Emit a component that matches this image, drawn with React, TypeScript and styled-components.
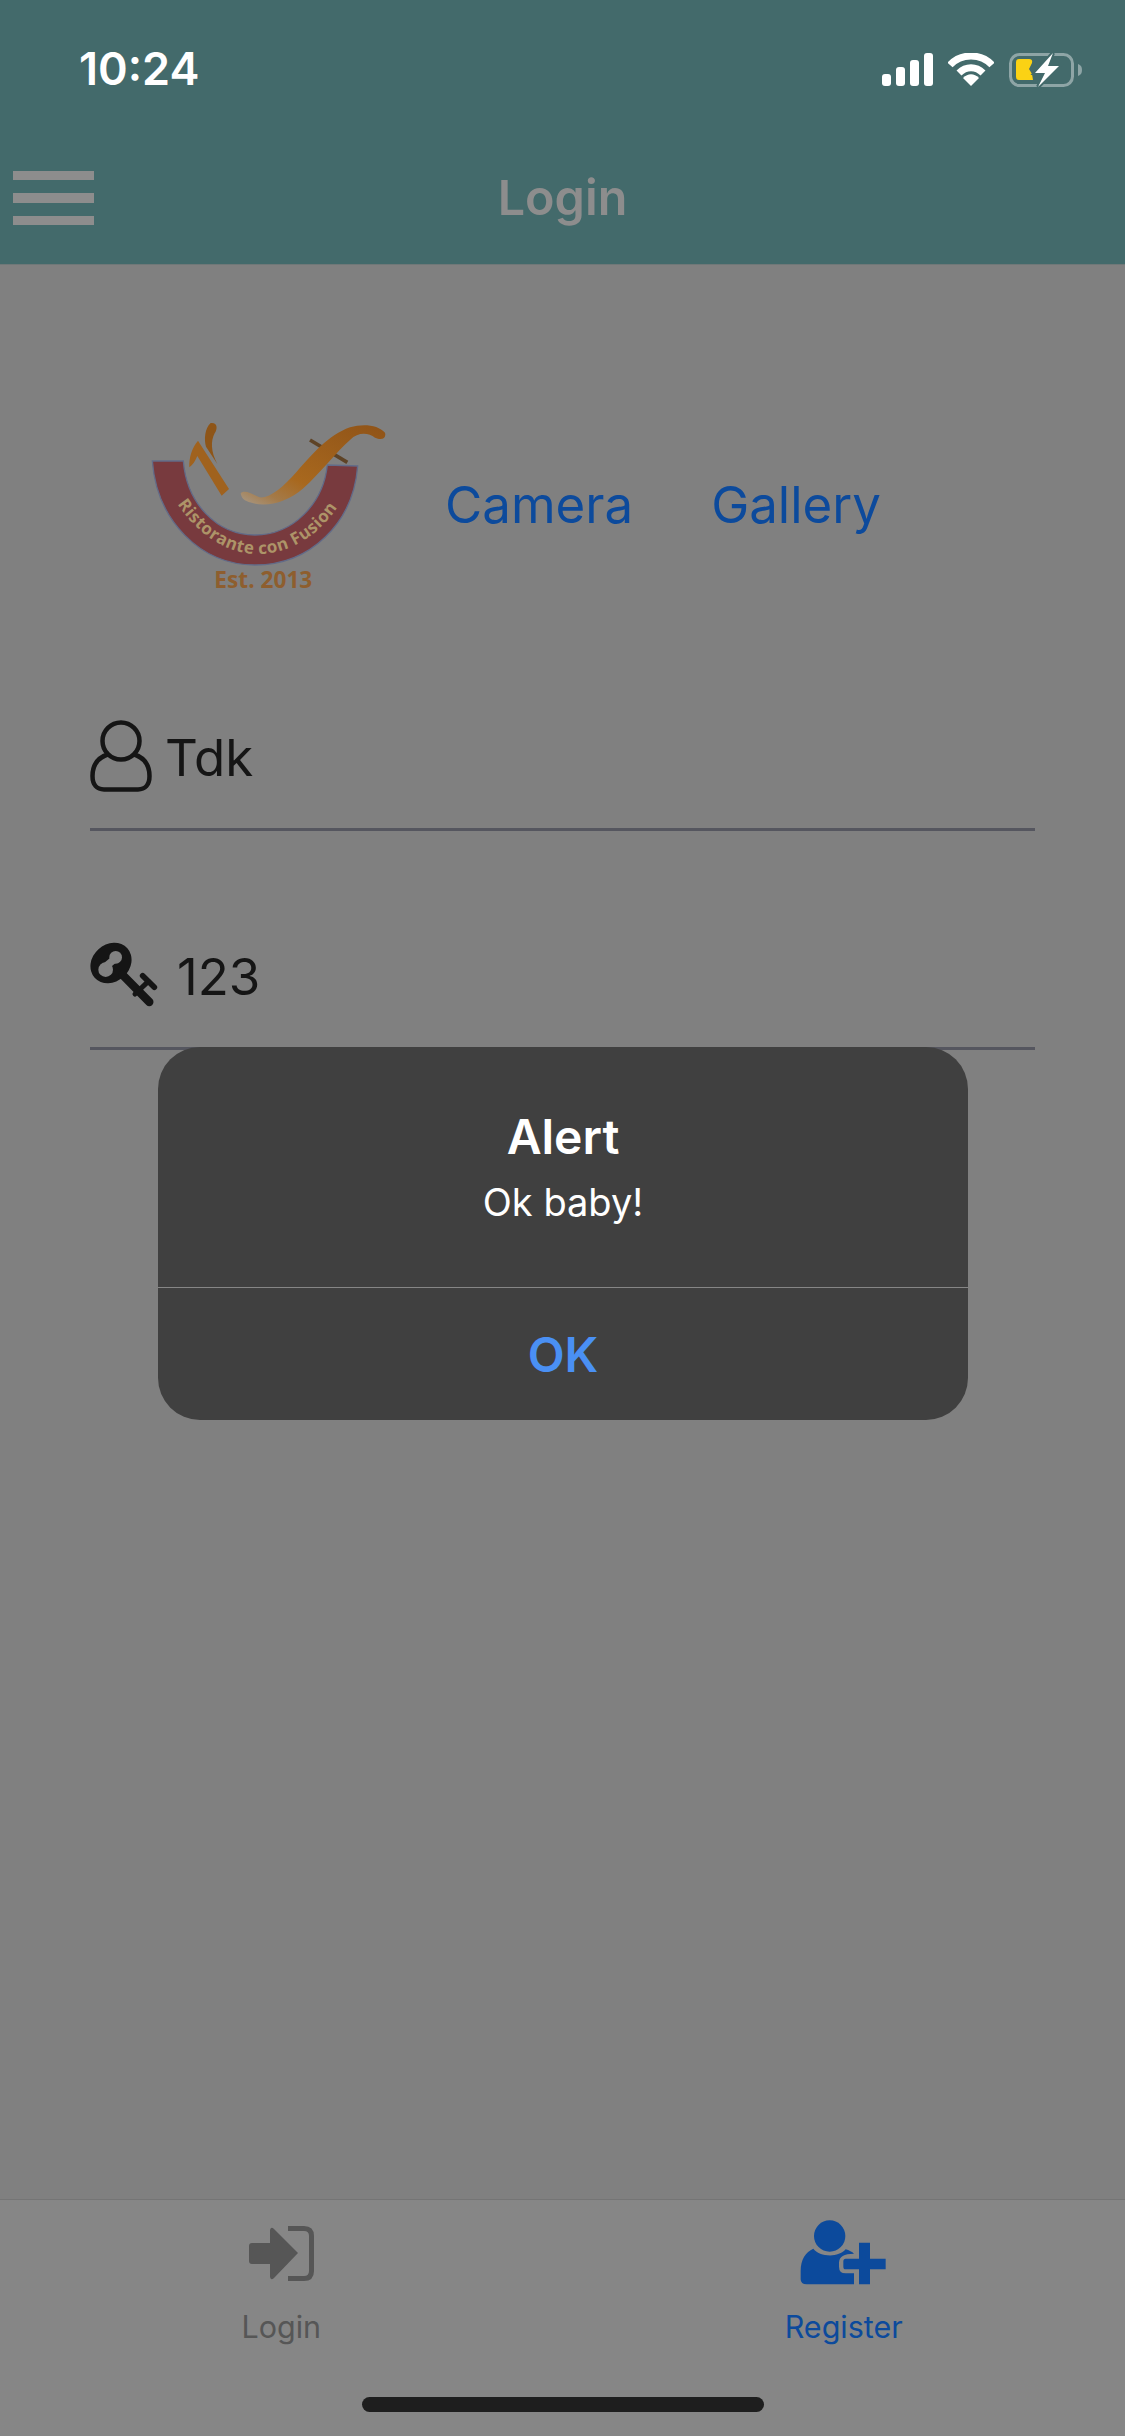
import React from "react";
import styled, { createGlobalStyle } from "styled-components";

const GlobalStyle = createGlobalStyle`
  html, body {
    margin: 0;
    padding: 0;
    background: #808080;
  }
  * {
    box-sizing: border-box;
  }
`;

const Screen = styled.div`
  position: relative;
  width: 1125px;
  height: 2436px;
  display: flex;
  flex-direction: column;
  overflow: hidden;
  background: #808080;
  font-family: Inter, "Liberation Sans", sans-serif;
`;

const Header = styled.header`
  height: 265px;
  background: #436a6b;
  border-bottom: 1px solid #6f7878;
  display: flex;
  flex-direction: column;
`;

const StatusBar = styled.div`
  height: 132px;
  padding: 47px 42px 0 79px;
  display: flex;
  justify-content: space-between;
  align-items: flex-start;
`;

const Clock = styled.div`
  color: #fff;
  font-size: 45px;
  font-weight: 600;
  line-height: 44px;
`;

const StatusIcons = styled.div`
  display: flex;
  gap: 15px;
  align-items: flex-start;
  margin-top: 6px;
`;

const NavBar = styled.div`
  flex: 1;
  display: grid;
  grid-template-columns: 1fr auto 1fr;
  align-items: center;
  padding: 0 13px;
`;

const Burger = styled.div`
  width: 81px;
  display: flex;
  flex-direction: column;
  gap: 13px;
  span {
    height: 9.5px;
    background: #8d8d8d;
  }
`;

const NavTitle = styled.div`
  color: #8d8d8d;
  font-size: 48.5px;
  font-weight: 600;
  line-height: 60px;
`;

const Content = styled.main`
  flex: 1;
  padding: 0 90px;
  display: flex;
  flex-direction: column;
`;

const ImageRow = styled.div`
  margin-top: 125px;
  padding-left: 30px;
  display: flex;
  align-items: center;
`;

const ImageLink = styled.div<{ $gap: number }>`
  color: #0c4a9c;
  font-size: 51px;
  line-height: 60px;
  margin-top: 9px;
  margin-left: ${(p) => p.$gap}px;
`;

const Field = styled.div<{ $height: number; $gap: number }>`
  height: ${(p) => p.$height}px;
  display: flex;
  align-items: flex-start;
  border-bottom: 3px solid #55565f;
  gap: ${(p) => p.$gap}px;
  color: #151515;
  font-size: 51px;
`;

const FieldIcon = styled.div<{ $top: number; $left?: number }>`
  margin-top: ${(p) => p.$top}px;
  margin-left: ${(p) => p.$left ?? 0}px;
  display: flex;
`;

const FieldText = styled.div<{ $top: number }>`
  margin-top: ${(p) => p.$top}px;
  line-height: 60px;
`;

const TabBar = styled.nav`
  height: 237px;
  background: #868686;
  border-top: 1px solid #757575;
  display: grid;
  grid-template-columns: 1fr 1fr;
`;

const Tab = styled.div<{ $active?: boolean }>`
  display: flex;
  flex-direction: column;
  align-items: center;
  height: 145px;
  justify-content: flex-end;
  color: ${(p) => (p.$active ? "#0c4a9c" : "#565656")};
  font-size: 30.5px;
  line-height: 36px;
`;

const TabIcon = styled.div`
  height: 74px;
  display: flex;
  align-items: center;
  margin-bottom: 19px;
`;

const HomeBar = styled.div`
  position: absolute;
  left: 362px;
  top: 2397px;
  width: 402px;
  height: 15px;
  border-radius: 8px;
  background: #1e1e1e;
`;

const AlertBox = styled.div`
  position: absolute;
  left: 158px;
  top: 1047px;
  width: 810px;
  height: 373px;
  border-radius: 42px;
  background: #404040;
  display: flex;
  flex-direction: column;
  color: #fff;
  text-align: center;
`;

const AlertBody = styled.div`
  height: 241px;
  padding-top: 61px;
  border-bottom: 1px solid #868686;
`;

const AlertTitle = styled.div`
  font-size: 48px;
  font-weight: 600;
  line-height: 58px;
`;

const AlertMessage = styled.div`
  font-size: 38px;
  line-height: 46px;
  margin-top: 13px;
`;

const AlertButton = styled.div`
  flex: 1;
  display: flex;
  align-items: center;
  justify-content: center;
  color: #4a90f4;
  font-size: 48px;
  font-weight: 600;
`;

const SignalIcon = () => (
  <svg width="52" height="33" viewBox="0 0 52 33" fill="#fff">
    <rect x="1" y="21" width="9" height="12" rx="3" />
    <rect x="15" y="14" width="9" height="19" rx="3" />
    <rect x="29" y="7" width="9" height="26" rx="3" />
    <rect x="43" y="0" width="9" height="33" rx="3" />
  </svg>
);

const WifiIcon = () => (
  <svg width="46" height="33" viewBox="0 0 46 33" fill="none" stroke="#fff" strokeWidth="7">
    <path d="M2 12 C13 0 33 0 44 12" />
    <path d="M11 20 C18 13 28 13 35 20" />
    <path d="M15 25 L23 33 L31 25 C26 20 20 20 15 25Z" fill="#fff" strokeWidth="0" />
  </svg>
);

const BatteryIcon = () => (
  <svg width="74" height="34" viewBox="0 0 74 34" fill="none">
    <rect x="1.5" y="1.5" width="62" height="31" rx="9" stroke="#8ea5a6" strokeWidth="3" />
    <path d="M69 11 C72 12 73 14 73 17 C73 20 72 22 69 23Z" fill="#8ea5a6" />
    <path d="M7 9 Q7 6 10 6 L20 6 Q24 6 23 10 L20 16 L23 21 L24 27 L10 27 Q7 27 7 24Z" fill="#fbd214" />
    <path
      d="M44 0 L26 20 L36 20 L29 34 L50 13 L39 13Z"
      fill="#fff"
      stroke="#436a6b"
      strokeWidth="4"
      paintOrder="stroke"
    />
  </svg>
);

const Logo = () => (
  <svg width="300" height="220" viewBox="0 0 900 660">
    <defs>
      <linearGradient id="ribbon" x1="0" y1="1" x2="1" y2="0">
        <stop offset="0" stopColor="#a89a88" />
        <stop offset="0.16" stopColor="#a47a48" />
        <stop offset="0.35" stopColor="#a8681e" />
        <stop offset="1" stopColor="#8f5318" />
      </linearGradient>
      <path id="arcText" d="M172 342 C245 450 335 492 415 492 C510 492 600 435 660 340" />
    </defs>
    <path
      d="M97 213 L190 213 C200 340 290 435 405 435 C520 435 610 340 622 225 L713 228 C700 400 570 525 405 525 C240 525 110 390 97 213Z"
      fill="#783a3e"
      stroke="#626b88"
      strokeWidth="4"
    />
    <text fontFamily="'Open Sans', sans-serif" fontSize="51" fontWeight="700" fill="#ad9468" letterSpacing="1.5">
      <textPath href="#arcText">Ristorante con Fusion</textPath>
    </text>
    <text x="430" y="594" textAnchor="middle" fontFamily="'Open Sans', sans-serif" fontSize="68" fontWeight="700" fill="#8e5e2e">
      Est. 2013
    </text>
    <path d="M234 152 L327 297 L305 317 L232 198 C226 212 218 226 208 232 C206 205 216 172 234 152Z" fill="#a0621e" />
    <path d="M272 99 C292 96 294 115 284 130 C272 152 272 185 292 222 L258 170 C252 148 254 116 272 99Z" fill="#8e5518" />
    <path d="M570 150 L682 217" stroke="#5e4326" strokeWidth="11" />
    <path
      d="M362 310 C375 298 395 312 418 322 C450 326 490 290 530 245 C575 195 625 135 690 112 C730 100 775 105 795 128 C800 145 785 152 765 143 C745 128 715 125 690 150 C650 185 600 250 550 295 C505 335 445 352 400 340 C380 335 365 330 362 310Z"
      fill="url(#ribbon)"
    />
  </svg>
);

const UserOutlineIcon = () => (
  <svg width="62" height="72" viewBox="0 0 62 72" fill="none" stroke="#151515" strokeWidth="4.5">
    <circle cx="31" cy="21" r="18.5" />
    <path d="M19 34 C9 37 2.5 44 2.5 56 C2.5 65 7 69.5 14 69.5 L48 69.5 C55 69.5 59.5 65 59.5 56 C59.5 44 53 37 43 34" />
  </svg>
);

const KeyIcon = () => (
  <svg width="80" height="74" viewBox="0 0 240 222" fill="none" stroke="#151515" strokeLinecap="round">
    <ellipse cx="78" cy="75" rx="66" ry="56" transform="rotate(-42 78 75)" fill="#151515" stroke="none" />
    <circle cx="62" cy="95" r="22" fill="#828282" stroke="none" />
    <circle cx="92" cy="58" r="19" fill="#828282" stroke="none" />
    <path d="M66 82 L90 62" stroke="#828282" strokeWidth="22" />
    <path d="M112 110 L193 192" strokeWidth="25" />
    <path d="M150 168 L190 130" strokeWidth="15" />
    <path d="M173 113 L208 148" strokeWidth="17" />
  </svg>
);

const LoginTabIcon = () => (
  <svg width="65" height="55" viewBox="0 0 65 55" fill="none">
    <path d="M0 20 Q0 17 3 17 L21 17 L21 4 Q22 0 25 3 L49 27 L25 52 Q22 55 21 51 L21 38 L3 38 Q0 38 0 35Z" fill="#565656" />
    <path d="M39 2.5 L55 2.5 Q62.5 2.5 62.5 10 L62.5 45 Q62.5 52.5 55 52.5 L39 52.5" stroke="#565656" strokeWidth="5" />
  </svg>
);

const RegisterTabIcon = () => (
  <svg width="100" height="74" viewBox="0 0 300 222" fill="#0c4a9c">
    <circle cx="107" cy="60" r="47" />
    <path d="M58 98 C75 122 132 127 155 100 C165 103 175 108 180 113 C150 113 135 122 135 140 L135 152 Q135 172 155 172 L180 172 L180 205 L38 205 Q20 205 20 190 L20 165 C20 130 35 108 58 98Z" />
    <path d="M195 80 L228 80 L228 128 L275 128 L275 160 L228 160 L228 205 L195 205 L195 160 L155 160 Q148 160 148 152 L148 136 Q148 128 155 128 L195 128Z" />
  </svg>
);

export default function App() {
  return (
    <Screen>
      <GlobalStyle />
      <Header>
        <StatusBar>
          <Clock>10:24</Clock>
          <StatusIcons>
            <SignalIcon />
            <WifiIcon />
            <BatteryIcon />
          </StatusIcons>
        </StatusBar>
        <NavBar>
          <Burger>
            <span />
            <span />
            <span />
          </Burger>
          <NavTitle>Login</NavTitle>
        </NavBar>
      </Header>

      <Content>
        <ImageRow>
          <Logo />
          <ImageLink $gap={25}>Camera</ImageLink>
          <ImageLink $gap={78}>Gallery</ImageLink>
        </ImageRow>
        <Field $height={221} $gap={13}>
          <FieldIcon $top={110}>
            <UserOutlineIcon />
          </FieldIcon>
          <FieldText $top={118}>Tdk</FieldText>
        </Field>
        <Field $height={219} $gap={12}>
          <FieldIcon $top={107} $left={-5}>
            <KeyIcon />
          </FieldIcon>
          <FieldText $top={116}>123</FieldText>
        </Field>
      </Content>

      <TabBar>
        <Tab>
          <TabIcon>
            <LoginTabIcon />
          </TabIcon>
          Login
        </Tab>
        <Tab $active>
          <TabIcon>
            <RegisterTabIcon />
          </TabIcon>
          Register
        </Tab>
      </TabBar>
      <HomeBar />

      <AlertBox>
        <AlertBody>
          <AlertTitle>Alert</AlertTitle>
          <AlertMessage>Ok baby!</AlertMessage>
        </AlertBody>
        <AlertButton>OK</AlertButton>
      </AlertBox>
    </Screen>
  );
}
